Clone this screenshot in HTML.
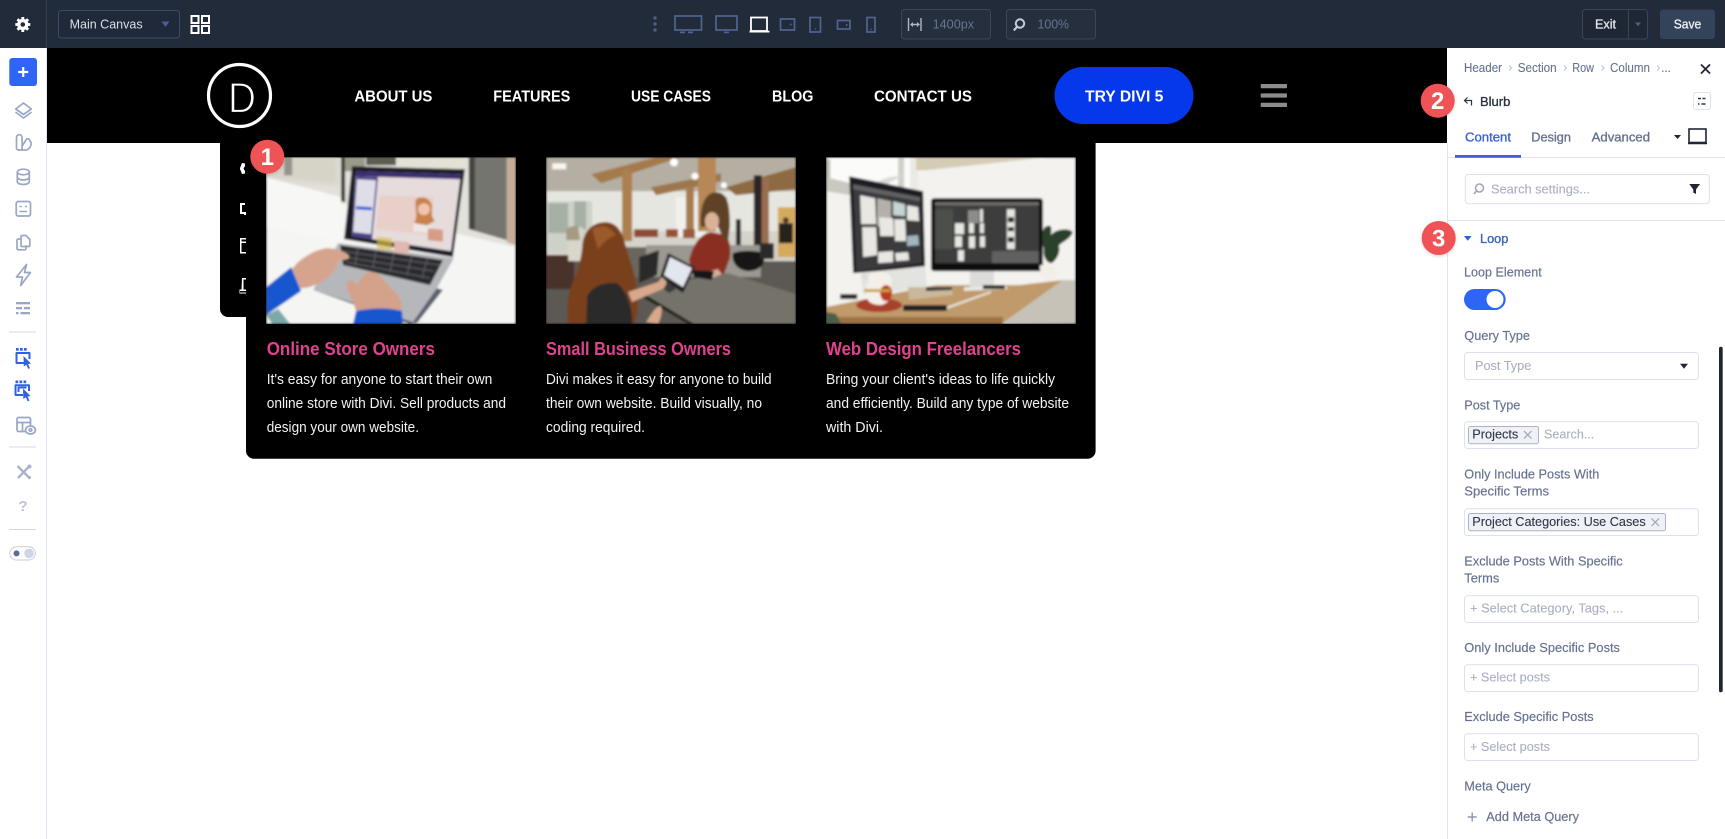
<!DOCTYPE html>
<html lang="en">
<head>
<meta charset="utf-8">
<title>Divi Builder</title>
<style>
html,body{margin:0;padding:0;background:#fff;width:1725px;height:839px;overflow:hidden}
svg{display:block}
text{font-family:"Liberation Sans",Arial,sans-serif}
.nav{font-size:16px;font-weight:700;fill:#fff}
.tt{font-size:18.5px;font-weight:700;fill:#e0428e}
.ds{font-size:14.7px;fill:#f2f2f2}
.lb{font-size:13px;fill:#66728f;stroke:#66728f;stroke-width:.18}
.ph{font-size:13px;fill:#a8afc0;stroke:#a8afc0;stroke-width:.1}
.tag{font-size:13px;fill:#2f3847;stroke:#2f3847;stroke-width:.12}
.crumb{font-size:12.6px;fill:#66738f;stroke:#66738f;stroke-width:.1}
.f{fill:#fff;stroke:#dde1ec;stroke-width:1}
.i{fill:none;stroke:#9aa6c6;stroke-width:1.7;stroke-linecap:round;stroke-linejoin:round}
.b{fill:none;stroke:#2f62e0;stroke-width:2;stroke-linejoin:round}
.d{fill:none;stroke:#50648f;stroke-width:1.7}
.badge{font-size:24px;font-weight:700;fill:#fff;text-anchor:middle}
</style>
</head>
<body>
<svg xmlns="http://www.w3.org/2000/svg" width="1725" height="839" viewBox="0 0 1725 839">
<defs>
<filter id="bl" x="-5%" y="-5%" width="110%" height="110%"><feGaussianBlur stdDeviation="1"/></filter>
<filter id="bl2" x="-10%" y="-10%" width="120%" height="120%"><feGaussianBlur stdDeviation="3"/></filter>
<filter id="sh" x="-30%" y="-30%" width="160%" height="160%"><feDropShadow dx="0" dy="1" stdDeviation="1.5" flood-color="#000" flood-opacity=".18"/></filter>
</defs>

<rect width="1725" height="839" fill="#fff"/>

<!-- Top bar -->
<rect width="1725" height="48" fill="#222b3a"/>
<rect x="46" y="0" width="1" height="48" fill="#343e50"/>
<!-- gear -->
<circle cx="22.800" cy="24.500" r="4" fill="none" stroke="#fff" stroke-width="3.400"/>
<path d="M22.800 17v15M15.300 24.500h15M17.500 19.200l10.600 10.600M28.100 19.200L17.500 29.800" stroke="#fff" stroke-width="2.800" stroke-dasharray="3.200 8.600 3.200" fill="none"/>
<rect x="58.500" y="10.500" width="121" height="27.500" rx="3" fill="#20293a" stroke="#3d4a68"/>
<text x="69.600" y="28.600" font-size="13" fill="#d9dee8" textLength="73" lengthAdjust="spacingAndGlyphs">Main Canvas</text>
<path d="M161.500 21.500h8l-4 5.500z" fill="#4a5d92"/>
<g fill="none" stroke="#fff" stroke-width="2">
<rect x="191.500" y="16" width="7" height="7"/><rect x="202" y="16" width="7" height="7"/>
<rect x="191.500" y="26" width="7" height="7"/><rect x="202" y="26" width="7" height="7"/>
</g>
<!-- device icons -->
<g fill="#4f5e7c"><circle cx="655" cy="18" r="1.700"/><circle cx="655" cy="24" r="1.700"/><circle cx="655" cy="30" r="1.700"/></g>
<g class="d">
<rect x="675" y="16" width="26.500" height="14"/><path d="M680 32.400h5M688 32.400h5"/>
<rect x="716" y="16" width="21" height="14"/><path d="M724 32.400h5"/>
<rect x="780.500" y="19" width="14" height="11"/><path d="M790 24.500h1.500"/>
<rect x="810" y="17.500" width="10.500" height="14.500"/><path d="M815 29h.8"/>
<rect x="837.500" y="20.500" width="12.500" height="8.500"/><path d="M846 25h1.500"/>
<rect x="867" y="17.500" width="8" height="14.500"/><path d="M870.500 29.500h1"/>
</g>
<rect x="751" y="17.500" width="16" height="13.500" fill="none" stroke="#fff" stroke-width="1.800"/>
<path d="M749.500 31.600h20" stroke="#fff" stroke-width="1.800"/>
<rect x="901.500" y="9.500" width="89" height="29.500" rx="3" fill="#262f3e" stroke="#3b465a"/>
<rect x="1006.500" y="9.500" width="89" height="29.500" rx="3" fill="#262f3e" stroke="#3b465a"/>
<path d="M908.500 18v13M921 18v13M911 24.500h8" stroke="#aeb6c6" stroke-width="1.400" fill="none"/>
<path d="M910 24.500l3-2.500v5zM920 24.500l-3-2.500v5z" fill="#aeb6c6"/>
<text x="932.600" y="28.600" font-size="13" fill="#66748f" textLength="41.500" lengthAdjust="spacingAndGlyphs">1400px</text>
<circle cx="1020" cy="23.500" r="4.200" fill="none" stroke="#c6ccd8" stroke-width="2"/>
<path d="M1017 27l-3.200 3.400" stroke="#c6ccd8" stroke-width="2.200"/>
<text x="1037.500" y="28.600" font-size="13" fill="#66748f" textLength="31.500" lengthAdjust="spacingAndGlyphs">100%</text>
<rect x="1582.500" y="9.500" width="65" height="29.500" rx="3" fill="#1f2735" stroke="#3a4558"/>
<path d="M1628.500 9.500v29.500" stroke="#3a4558"/>
<text x="1595" y="28.300" font-size="13" fill="#e6e9ef" stroke="#e6e9ef" stroke-width=".3" textLength="21" lengthAdjust="spacingAndGlyphs">Exit</text>
<path d="M1635 22.500h6l-3 3.800z" fill="#53627f"/>
<rect x="1660" y="9.500" width="55" height="29.500" rx="3" fill="#33435a"/>
<text x="1673.700" y="28.300" font-size="13" fill="#edf0f5" stroke="#edf0f5" stroke-width=".3" textLength="27.600" lengthAdjust="spacingAndGlyphs">Save</text>

<!-- Header -->
<rect x="47" y="48" width="1400" height="95" fill="#000"/>
<circle cx="239.500" cy="95.500" r="31" fill="none" stroke="#fff" stroke-width="3.200"/>
<text x="228" y="112.600" font-size="43" fill="#fff" stroke="#000" stroke-width="1.200" textLength="28" lengthAdjust="spacingAndGlyphs">D</text>
<text class="nav" x="354.400" y="101.500" textLength="78" lengthAdjust="spacingAndGlyphs">ABOUT US</text>
<text class="nav" x="493.300" y="101.500" textLength="77" lengthAdjust="spacingAndGlyphs">FEATURES</text>
<text class="nav" x="631" y="101.500" textLength="80" lengthAdjust="spacingAndGlyphs">USE CASES</text>
<text class="nav" x="772" y="101.500" textLength="41.400" lengthAdjust="spacingAndGlyphs">BLOG</text>
<text class="nav" x="874" y="101.500" textLength="98" lengthAdjust="spacingAndGlyphs">CONTACT US</text>
<rect x="1054.500" y="67" width="139" height="57" rx="28.500" fill="#0438ea"/>
<text class="nav" x="1085" y="101.500" textLength="78.400" lengthAdjust="spacingAndGlyphs">TRY DIVI 5</text>
<g fill="#8c8c8c"><rect x="1260.700" y="84" width="26.300" height="4.200" rx=".8"/><rect x="1260.700" y="93.400" width="26.300" height="4.200" rx=".8"/><rect x="1260.700" y="102.800" width="26.300" height="4.200" rx=".8"/></g>

<!-- Sidebar -->
<rect x="46" y="48" width="1" height="791" fill="#dfe3f0"/>
<rect x="9.300" y="58" width="27.700" height="28" rx="3" fill="#2f65f5"/>
<path d="M23.200 67v10M18.200 72h10" stroke="#fff" stroke-width="2.200"/>
<g class="i">
<path d="M23.500 103l7.800 6-7.800 5.500-7.800-5.500z"/><path d="M16 112.500l7.500 5.500 7.500-5.500"/>
<path d="M16.500 148v-10.500a2.800 2.800 0 0 1 5.600 0V150h-3.600a2 2 0 0 1-2-2z"/><path d="M22.200 146l3.800-6c1-1.800 3-1.500 3.600.2.300.8 2 1.800 1.500 4.300-.6 3-3 5.500-5.600 5.500h-3.300"/>
<ellipse cx="23.300" cy="172" rx="6" ry="2.800"/><path d="M17.300 172v9.500c0 1.800 2.700 3 6 3s6-1.200 6-3V172M17.300 177c0 1.800 2.700 3 6 3s6-1.200 6-3"/>
<rect x="16.200" y="201.500" width="14.300" height="14.500" rx="2"/>
<path d="M20 206.500h1M25.500 206.500h1M20 211.500h6.500" stroke-width="1.500"/>
<path d="M21 239h-2.700a1.300 1.300 0 0 0-1.300 1.300v8.200a1.300 1.300 0 0 0 1.300 1.300h6.400a1.300 1.300 0 0 0 1.300-1.300V246"/><path d="M21 236.500a1 1 0 0 1 1-1h4l3.800 4v6a1 1 0 0 1-1 1H22a1 1 0 0 1-1-1z"/>
<path d="M26.500 264.500l-10 12.500h6l-1.800 8.500 9.800-13h-6z"/>
</g>
<g fill="#9aa6c6">
<rect x="16" y="302" width="14" height="2.300"/><rect x="16" y="307" width="6" height="2.300"/><rect x="24" y="307" width="6" height="2.300"/><rect x="16" y="312" width="2.500" height="2.300"/><rect x="20.500" y="312" width="9.500" height="2.300"/>
</g>
<g fill="#d3d8e6"><rect x="9" y="331.500" width="27" height="1"/><rect x="9" y="446.500" width="27" height="1"/><rect x="9" y="529" width="27" height="1"/></g>
<g fill="#2f62e0"><rect x="16" y="348" width="2.700" height="2.700"/><rect x="20" y="348" width="2.700" height="2.700"/><rect x="24" y="348" width="2.700" height="2.700"/>
<rect x="15.500" y="380.500" width="2.700" height="2.700"/><rect x="19.500" y="380.500" width="2.700" height="2.700"/><rect x="23.500" y="380.500" width="2.700" height="2.700"/></g>
<path class="b" d="M24 363h-7.500v-10h13v6"/>
<path d="M23.500 356l7.500 7.500-3 .6 2 4-1.700.8-2-4.200-2.500 1.800z" fill="#2f62e0"/>
<path class="b" d="M23 395h-7.500v-9.800h13.500V391"/><path class="b" d="M18.500 392v-4.500h8"/>
<path d="M23 388.500l7.500 7.500-3 .6 2 4-1.700.8-2-4.200-2.500 1.800z" fill="#2f62e0"/>
<g class="i">
<rect x="17" y="417.500" width="13.500" height="14" rx="1.500"/><path d="M17 422.500h13.500M22.500 422.500v9"/>
<ellipse cx="30.500" cy="430" rx="5" ry="4" fill="#fff"/><circle cx="30.500" cy="430" r="1.300"/>
</g>
<path d="M17.500 466l12.500 12.500" stroke="#a9b3cc" stroke-width="2.400"/>
<path d="M30 465.500L18 478" stroke="#a9b3cc" stroke-width="2.400"/>
<circle cx="29.500" cy="477.500" r="1.600" fill="#a9b3cc"/><circle cx="29.500" cy="466.500" r="2" fill="#a9b3cc"/>
<text x="23" y="511" font-size="15" font-weight="700" fill="#bcc3d6" text-anchor="middle">?</text>
<rect x="9.800" y="546.800" width="25.500" height="13.200" rx="6.600" fill="#fff" stroke="#c8cede"/>
<circle cx="16.500" cy="553.400" r="3" fill="#5a6a96"/><circle cx="29" cy="553.400" r="4.800" fill="#cdd5e6"/>

<!-- Dropdown -->
<path d="M220 143h26v174h-18a8 8 0 0 1-8-8z" fill="#000"/>
<path d="M246 143h849.600v307.700a8 8 0 0 1-8 8H254a8 8 0 0 1-8-8z" fill="#000"/>
<g fill="#fff">
<path d="M240 168l2-5 3 .5v2.500l-1.500 2.500 1.500 2.500v2.500l-3 .5-2-5z"/>
<path d="M240 203h5v2h-3v7h4v3h-2v-1h-4z"/>
<path d="M240 238h6v1.500h-4.500v2h4.500v1.500h-4.500v9h4.500v1.500h-6z"/>
<path d="M242 278h4v1.500h-2.500v10h2.500v1.500h-6v1.500h6v1h-6.500v-4h2z"/>
</g>

<!-- Photo 1 -->
<svg x="266" y="157.300" width="250" height="166.700" viewBox="0 0 250 167">
<g filter="url(#bl)">
<rect width="250" height="167" fill="#f5f5f3"/>
<path d="M0 0h250v90L185 75 0 26z" fill="#e2e1da"/>
<path d="M0 0h72v28L0 20z" fill="#d6d3c7" filter="url(#bl2)"/>
<path d="M18 0h8v18h-8z" fill="#95938a"/>
<path d="M0 20l75 20 0 45L0 70z" fill="#f7f7f5"/>
<path d="M75 0h4v45l-4-1z" fill="#3e3d38"/>
<path d="M79 0h20v14H79z" fill="#9a9a8a"/>
<path d="M100 0h30v8h-30z" fill="#5d5c50"/>
<path d="M130 0h72v14h-72z" fill="#e4e1d6"/>
<path d="M203 0h38v83l-38-11z" fill="#74756f"/>
<path d="M203 0h6v72h-6z" fill="#45453f"/>
<path d="M241 0h9v88l-9-3z" fill="#c6ab98"/>
<!-- laptop base -->
<path d="M72 86l116 15-17 30-24 34-100-32z" fill="#b6b7ba"/>
<path d="M47 133l100 32 24-34 6 2-26 33-8 1z" fill="#5a6070"/>
<path d="M74 88l103 15-13 25-87-20z" fill="#2a2b2f"/>
<g stroke="#77787c" stroke-width="1" opacity=".7"><path d="M76 94l98 14M78 100l90 14M80 105l84 16"/><path d="M92 90l-3 18M110 93l-3 18M128 96l-4 19M146 98l-5 20M162 100l-6 21"/></g>
<!-- screen -->
<path d="M86 9l113 3-12 88-109-18z" fill="#1d1d28"/>
<path d="M90 14l105 3-10 77-99-15z" fill="#e6dcdb"/>
<path d="M90 14l105 3-.5 5-104.700-3z" fill="#3a2d70"/>
<path d="M90 19l22 1-6 62-20-3z" fill="#4b3f8a"/>
<path d="M91 22l19 1-5 54-18-2z" fill="#dedee8"/>
<path d="M90 49l16 1v3l-16-1z" fill="#1c57d8"/>
<path d="M114 38l54 2-5 38-53-6z" fill="#e8cfc9"/>
<path d="M150 42c6-4 14-1 16 6 1 6-2 10 3 16l-12 6-9-5c5-5 0-14 2-23z" fill="#c8824e"/>
<circle cx="158" cy="52" r="6" fill="#f0c4ae"/>
<path d="M148 66l18 3-1 7-18-2z" fill="#efe7e6"/>
<rect x="111" y="68" width="15" height="12" fill="#d8c04a" opacity=".7" transform="skewY(6)"/>
<rect x="128" y="70" width="15" height="12" fill="#e0b8b0" transform="skewY(6)"/>
<rect x="162" y="54" width="15" height="12" fill="#d59c86" transform="skewY(6)"/>
<!-- hands -->
<path d="M26 112c8-12 25-20 35-21 8 0 20 4 22 8 1 3-4 4-10 4-2 6-5 12-12 18-8 6-20 11-27 10z" fill="#d6a48d"/>
<path d="M81 125c5-4 8-1 10 4 2-6 8-14 14-14 6-1 10 5 16 12 6 7 14 12 15 20l-1 10-44 0c-2-6-4-14-10-24z" fill="#d4a28a"/>
<path d="M0 130l25-20 10 24L0 158z" fill="#1456cf"/>
<path d="M87 167l3-13c14-3 32-4 46 0l1 13z" fill="#1456cf"/>
<path d="M0 158l12-6 12 15H6z" fill="#7ba9a8"/>
</g>
</svg>

<!-- Photo 2 -->
<svg x="546" y="157.300" width="250" height="166.700" viewBox="0 0 250 167">
<g filter="url(#bl)">
<rect width="250" height="167" fill="#d5d3ca"/>
<path d="M0 0h250v34H0z" fill="#b5afa3"/>
<path d="M0 34h250v40H0z" fill="#e6e6e0"/>
<path d="M130 40h30v40h-30z" fill="#f0f1ee"/>
<path d="M0 44h46v50H0z" fill="#cdd2c8"/>
<path d="M2 46h20v30H2zM28 44h12v28H28z" fill="#8d9a8e" opacity=".6"/>
<rect x="0" y="104" width="250" height="63" fill="#5b5953"/>
<path d="M100 88h115v32H100z" fill="#9a9890"/>
<path d="M45 17L110 0h25L55 26z" fill="#a47a4c"/>
<path d="M105 30l70-14 0 8-65 14z" fill="#9c774d"/>
<path d="M180 30l70-20v22l-60 6z" fill="#8d6a42"/>
<rect x="76" y="12" width="10" height="72" fill="#ad7f4e"/>
<rect x="140" y="30" width="8" height="48" fill="#a97c4e"/>
<rect x="152" y="0" width="18" height="74" fill="#b78755"/>
<rect x="176" y="40" width="5" height="40" fill="#a07a52"/>
<rect x="208" y="18" width="8" height="70" fill="#2a2825"/>
<rect x="216" y="20" width="7" height="70" fill="#9b6c4f"/>
<path d="M232 50h18v50h-18z" fill="#d5aa5e"/>
<rect x="233" y="66" width="14" height="20" fill="#26231f"/>
<circle cx="240" cy="63" r="3" fill="#4a372b"/>
<rect x="190" y="62" width="5" height="26" fill="#2c2b2d"/>
<circle cx="128" cy="5" r="4" fill="#fff"/><circle cx="149" cy="19" r="3.500" fill="#fff"/><circle cx="178" cy="28" r="3" fill="#fff"/>
<rect x="6" y="6" width="14" height="6" fill="#f7f7f2"/>
<path d="M0 98h28v34H0z" fill="#4a3029"/>
<rect x="22" y="70" width="14" height="34" fill="#d9d6cc"/>
<path d="M20 72c2-2 8-4 12-3l2 14H20z" fill="#a59b83"/>
<rect x="88" y="72" width="24" height="8" fill="#8f4a36"/><rect x="120" y="72" width="12" height="8" fill="#9a4f38"/><rect x="137" y="72" width="12" height="9" fill="#9a5a3e"/>
<path d="M187 96c8-3 22-3 31 0 2 10-2 17-15 18-10 0-18-8-16-18z" fill="#151515"/>
<rect x="214" y="86" width="14" height="16" fill="#2a2a2a"/>
<path d="M90 132l92-16 68 21v30H148z" fill="#747369"/>
<path d="M90 132l58 35h-6l-56-33z" fill="#24221f"/>
<path d="M80 90h20v30H80z" fill="#6a665c"/>
<path d="M93 100l20-7 -2 25-18 8z" fill="#2b2b2b"/>
<!-- woman in red -->
<path d="M143 103c4-14 10-26 22-28l10 2c10 2 10 14 9 24l-6 16-20 2-12-5z" fill="#8b2d22"/>
<path d="M155 70c-2-20 4-35 15-35 12 0 14 12 14 34l-2 16-5-4c-3-8-6-14-7-14-6 0-9 2-15 3z" fill="#5f4326"/>
<ellipse cx="166" cy="64" rx="7" ry="9" fill="#dcb295"/>
<path d="M160 115l12-3 4 5-10 4z" fill="#d6ad96"/>
<path d="M146 113l22 1-2 9-18-3z" fill="#171717"/>
<!-- tablet -->
<path d="M122 96l27 14-12 26-23-16z" fill="#1f1f22"/>
<path d="M124 100l22 11-9 19-19-12z" fill="#e2e7ef"/>
<path d="M110 126l10-4 10 10-7 4z" fill="#3a3a3d"/>
<!-- red head -->
<path d="M36 90c1-16 10-25 24-25 12 1 16 10 20 25 6 20 12 36 12 55 0 10-2 18-4 22H22c-2-14-1-28 3-38 6-14 10-26 11-39z" fill="#7a401f"/>
<path d="M46 72c10-6 18-2 24 6-6 2-12 6-18 14z" fill="#9a5a2c"/>
<path d="M41 139c6-11 18-14 30-13 10 8 16 26 15 41H40z" fill="#2b2b2c"/>
<path d="M82 135l30-10 4-5 4 4c1 4-2 8-6 9l-28 12z" fill="#d7a88b"/>
<path d="M100 165c6-8 8-14 14-16 3 2 2 10-2 18z" fill="#d7a88b"/>
</g>
</svg>

<!-- Photo 3 -->
<svg x="826" y="157.300" width="250" height="166.700" viewBox="0 0 250 167">
<g filter="url(#bl)">
<rect width="250" height="167" fill="#f3f2ef"/>
<path d="M0 0h85v40L0 20z" fill="#fbfbf9"/>
<path d="M0 2l4 0 0 30-4-2z" fill="#bfbfb5"/>
<path d="M0 20l73 18 4 8L0 34z" fill="#c9c9bf"/>
<rect x="72" y="0" width="6" height="40" fill="#cfcfc6"/><rect x="84" y="0" width="8" height="120" fill="#ebeae5"/>
<path d="M90 0h130L100 13l-10 0z" fill="#d5ccb4"/>
<path d="M50 25l12-5 16-2-14 7-8 5z" fill="#dbdbd3"/>
<!-- desk -->
<path d="M0 150l110-22 83 0 44-5-60 43-10 1H0z" fill="#c09a6a"/>
<path d="M177 166l60-43h13v44z" fill="#c6c2b8"/>
<path d="M0 160h177v7H0z" fill="#9c7244"/>
<path d="M120 150l45-16 0 2-44 16z" fill="#e9e5dc"/>
<!-- monitor 1 -->
<path d="M23 19l74 15 2 76-72 6z" fill="#1c1d20"/>
<path d="M27 27l67 13 2 66-66 8z" fill="#3a3b3d"/>
<path d="M27 27l67 13v4l-67-12z" fill="#8a8a8a" opacity=".5"/>
<g fill="#e9e7e2"><path d="M34 38l15 3 1 26-15 0z"/><path d="M51 41l14 3 0 28-14-3z" fill="#b5b1aa"/><path d="M53 60l14 1 1 18-14 0z"/><path d="M67 44l12 3v12l-12-1z" fill="#c4d5d2"/><path d="M68 62l11 0 1 22-11 0z"/><path d="M81 48l11 2 1 14-12-1z"/><path d="M81 79l11-1 1 10-12 1z" fill="#9fb7bd"/><path d="M36 70l14 0 1 28-14 2z"/><path d="M52 95l15-1 0 11-15 1z"/><path d="M69 96l13-1 1 8-13 1z"/></g>
<path d="M35 116l64-7 2 21-58 8-6 0z" fill="#e3e3df"/>
<!-- monitor 2 -->
<rect x="144" y="114" width="24" height="16" fill="#dcdcda"/>
<path d="M138 130l42-1 2 3-44 2z" fill="#e8e8e4"/>
<rect x="105" y="41" width="112" height="73" rx="3" fill="#111"/>
<rect x="109" y="45" width="104" height="61" fill="#3c3e3e"/>
<rect x="109" y="45" width="104" height="3" fill="#6f706e"/>
<rect x="109" y="52" width="18" height="40" fill="#4e4f4c"/>
<g fill="#e6e6e2"><rect x="129" y="66" width="9" height="11"/><rect x="142" y="53" width="11" height="13" fill="#8c8d8b"/><rect x="143" y="66" width="5" height="10"/><rect x="154" y="52" width="3" height="13"/><rect x="154" y="66" width="4" height="10"/><rect x="129" y="79" width="7" height="11"/><rect x="143" y="79" width="6" height="12"/><rect x="154" y="79" width="5" height="11"/><rect x="181" y="52" width="8" height="40"/><rect x="132" y="93" width="6" height="11"/><rect x="166" y="94" width="47" height="12" fill="#5e615f"/></g>
<g fill="#222"><rect x="182" y="60" width="6" height="5"/><rect x="182" y="70" width="6" height="4"/><rect x="182" y="80" width="6" height="5"/></g>
<!-- plant / pot -->
<path d="M219 70c4-2 8-4 6 8 4-6 18-8 22-3-3 8-12 10-14 14 2 4-1 13-7 17-5 0-9-6-8-14-2-8-3-16 1-22z" fill="#2c3f2a"/>
<path d="M214 108h17c0 10-3 16-8 16-6 0-9-6-9-16z" fill="#f4efe6"/>
<!-- misc -->
<path d="M82 130l44 0 1 8-44 5z" fill="#c9b89c"/>
<path d="M100 130h26v3l-26 1z" fill="#3a3a38"/>
<rect x="157" y="128" width="22" height="4" fill="#2a2723"/>
<rect x="14" y="137" width="17" height="5" fill="#26272a"/>
<rect x="77" y="148" width="44" height="6" rx="1.500" fill="#232325"/>
<path d="M35 116h22v6H35z" fill="#ddd"/>
<!-- lucky cat -->
<ellipse cx="53" cy="148" rx="23" ry="7" fill="#a8402b"/>
<path d="M43 123c-3-4 0-8 6-7 4-2 10-1 13 1 5 3 4 10 2 14 3 6 0 15-9 17-8 0-14-2-15-10 0-6 0-11 3-15z" fill="#f4efe9"/>
<ellipse cx="60" cy="136" rx="6" ry="8" fill="#bb3b22"/>
<path d="M38 132h26v3H38z" fill="#c9a23c"/>
<path d="M0 155l10 2 5 10H0z" fill="#4d5e4a"/>
</g>
</svg>

<!-- Dropdown text -->
<text class="tt" x="266.700" y="355" textLength="168.300" lengthAdjust="spacingAndGlyphs">Online Store Owners</text>
<text class="tt" x="546" y="355" textLength="185" lengthAdjust="spacingAndGlyphs">Small Business Owners</text>
<text class="tt" x="826" y="355" textLength="195" lengthAdjust="spacingAndGlyphs">Web Design Freelancers</text>
<text class="ds" x="266.700" y="384" textLength="225.600" lengthAdjust="spacingAndGlyphs">It's easy for anyone to start their own</text>
<text class="ds" x="266.700" y="408" textLength="239.300" lengthAdjust="spacingAndGlyphs">online store with Divi. Sell products and</text>
<text class="ds" x="266.700" y="432" textLength="152.300" lengthAdjust="spacingAndGlyphs">design your own website.</text>
<text class="ds" x="546" y="384" textLength="225.600" lengthAdjust="spacingAndGlyphs">Divi makes it easy for anyone to build</text>
<text class="ds" x="546" y="408" textLength="216" lengthAdjust="spacingAndGlyphs">their own website. Build visually, no</text>
<text class="ds" x="546" y="432" textLength="99" lengthAdjust="spacingAndGlyphs">coding required.</text>
<text class="ds" x="826" y="384" textLength="229" lengthAdjust="spacingAndGlyphs">Bring your client's ideas to life quickly</text>
<text class="ds" x="826" y="408" textLength="243" lengthAdjust="spacingAndGlyphs">and efficiently. Build any type of website</text>
<text class="ds" x="826" y="432" textLength="57" lengthAdjust="spacingAndGlyphs">with Divi.</text>

<!-- Right panel -->
<rect x="1447" y="48" width="278" height="791" fill="#fff"/>
<rect x="1447" y="143" width="1" height="696" fill="#dfe3ee"/>
<text class="crumb" x="1464" y="72" textLength="38" lengthAdjust="spacingAndGlyphs">Header</text>
<text class="crumb" x="1517.700" y="72" textLength="39" lengthAdjust="spacingAndGlyphs">Section</text>
<text class="crumb" x="1572.300" y="72" textLength="21.700" lengthAdjust="spacingAndGlyphs">Row</text>
<text class="crumb" x="1610" y="72" textLength="40" lengthAdjust="spacingAndGlyphs">Column</text>
<g fill="none" stroke="#b7bece" stroke-width="1"><path d="M1509 65.500l2.500 2.500-2.500 2.500M1564 65.500l2.500 2.500-2.500 2.500M1601.500 65.500l2.500 2.500-2.500 2.500M1657 65.500l2.500 2.500-2.500 2.500"/></g>
<text class="crumb" x="1661" y="72" textLength="10">...</text>
<path d="M1701 64.500l9 9M1710 64.500l-9 9" stroke="#1f2734" stroke-width="1.800" fill="none"/>
<path d="M1465 100.500h6.500v5M1467.500 97.500l-3 3 3 3" fill="none" stroke="#2b3443" stroke-width="1.200"/>
<text x="1480" y="106" font-size="13" fill="#2b3443" stroke="#2b3443" stroke-width=".35" textLength="30.300" lengthAdjust="spacingAndGlyphs">Blurb</text>
<rect x="1693.500" y="92.500" width="17" height="17" rx="2" fill="#fff" stroke="#dfe3ee"/>
<path d="M1698 98.500h3M1702.500 98.500h3M1698 104h1.500M1701.500 104h4" stroke="#2b3443" stroke-width="1.500"/>
<text x="1465" y="141.300" font-size="13" fill="#3a62d6" stroke="#3a62d6" stroke-width=".35" textLength="46" lengthAdjust="spacingAndGlyphs">Content</text>
<text x="1531.300" y="141.300" font-size="13" fill="#66738f" stroke="#66738f" stroke-width=".35" textLength="39.700" lengthAdjust="spacingAndGlyphs">Design</text>
<text x="1591.700" y="141.300" font-size="13" fill="#66738f" stroke="#66738f" stroke-width=".35" textLength="58.300" lengthAdjust="spacingAndGlyphs">Advanced</text>
<path d="M1674 135h7l-3.500 4z" fill="#1f2734"/>
<rect x="1689" y="129" width="17" height="13.500" fill="none" stroke="#1f2734" stroke-width="1.600"/><path d="M1688 143.500h19" stroke="#1f2734" stroke-width="1.400"/>
<rect x="1448" y="157" width="277" height="1" fill="#dfe3ee"/>
<rect x="1455" y="155" width="66" height="2.800" fill="#3a62d6"/>
<rect class="f" x="1465.300" y="174.500" width="244" height="29.300" rx="3"/>
<circle cx="1479.500" cy="188" r="4" fill="none" stroke="#9ca5b8" stroke-width="1.500"/><path d="M1476.500 191l-2.500 3" stroke="#9ca5b8" stroke-width="1.500"/>
<text class="ph" x="1491" y="193.700" textLength="99" lengthAdjust="spacingAndGlyphs">Search settings...</text>
<path d="M1689.300 184h10.700l-4 5.500v4.500l-2.700-1.400v-3.100z" fill="#1f2734"/>
<rect x="1448" y="220" width="277" height="1" fill="#dfe3ee"/>
<path d="M1464 236h7.500l-3.750 4.800z" fill="#2f5cd8"/>
<text x="1480" y="243" font-size="13" fill="#3a62c0" stroke="#3a62c0" stroke-width=".35" textLength="28.300" lengthAdjust="spacingAndGlyphs">Loop</text>
<text class="lb" x="1464" y="276.700" textLength="77.700" lengthAdjust="spacingAndGlyphs">Loop Element</text>
<rect x="1464" y="289" width="41.700" height="21" rx="10.500" fill="#2f65f5"/>
<circle cx="1495" cy="299.500" r="8.500" fill="#fff"/>
<text class="lb" x="1464.300" y="340" textLength="65.700" lengthAdjust="spacingAndGlyphs">Query Type</text>
<rect class="f" x="1464.500" y="352.500" width="234" height="27" rx="3"/>
<text class="ph" x="1475" y="370" textLength="56.300" lengthAdjust="spacingAndGlyphs">Post Type</text>
<path d="M1680 363.700h8l-4 5z" fill="#1f2734"/>
<text class="lb" x="1464.300" y="409.300" textLength="56" lengthAdjust="spacingAndGlyphs">Post Type</text>
<rect class="f" x="1464.500" y="421.700" width="234" height="26.800" rx="3"/>
<rect x="1468.500" y="426.500" width="70" height="17.200" rx="2" fill="#eff1f6" stroke="#aab3c9"/>
<text class="tag" x="1472.300" y="438.700" textLength="46" lengthAdjust="spacingAndGlyphs">Projects</text>
<path d="M1524 431l7.500 7.500M1531.500 431l-7.500 7.500" stroke="#9aa4b8" stroke-width="1.200"/>
<text class="ph" x="1544" y="438.700" textLength="50.300" lengthAdjust="spacingAndGlyphs">Search...</text>
<text class="lb" x="1464.300" y="478.300" textLength="135" lengthAdjust="spacingAndGlyphs">Only Include Posts With</text>
<text class="lb" x="1464.300" y="495.700" textLength="84.700" lengthAdjust="spacingAndGlyphs">Specific Terms</text>
<rect class="f" x="1464.500" y="508.700" width="234" height="26.800" rx="3"/>
<rect x="1468.500" y="513.500" width="197" height="17.200" rx="2" fill="#eff1f6" stroke="#aab3c9"/>
<text class="tag" x="1472.300" y="526" textLength="173.400" lengthAdjust="spacingAndGlyphs">Project Categories: Use Cases</text>
<path d="M1651.500 518.500l7.500 7.500M1659 518.500l-7.500 7.500" stroke="#9aa4b8" stroke-width="1.200"/>
<text class="lb" x="1464.300" y="565.300" textLength="158.400" lengthAdjust="spacingAndGlyphs">Exclude Posts With Specific</text>
<text class="lb" x="1464.300" y="582.700" textLength="35" lengthAdjust="spacingAndGlyphs">Terms</text>
<rect class="f" x="1464.500" y="595.700" width="234" height="26.800" rx="3"/>
<text class="ph" x="1470" y="612.700" textLength="153.300" lengthAdjust="spacingAndGlyphs">+ Select Category, Tags, ...</text>
<text class="lb" x="1464.300" y="652" textLength="155.700" lengthAdjust="spacingAndGlyphs">Only Include Specific Posts</text>
<rect class="f" x="1464.500" y="664.700" width="234" height="26.800" rx="3"/>
<text class="ph" x="1470" y="681.700" textLength="80" lengthAdjust="spacingAndGlyphs">+ Select posts</text>
<text class="lb" x="1464.300" y="721" textLength="129.400" lengthAdjust="spacingAndGlyphs">Exclude Specific Posts</text>
<rect class="f" x="1464.500" y="733.700" width="234" height="26.800" rx="3"/>
<text class="ph" x="1470" y="751" textLength="80" lengthAdjust="spacingAndGlyphs">+ Select posts</text>
<text class="lb" x="1464.300" y="790.700" textLength="66.400" lengthAdjust="spacingAndGlyphs">Meta Query</text>
<path d="M1467.700 817h9M1472.200 812.500v9" stroke="#8d97ad" stroke-width="1.400"/>
<text class="lb" x="1486.300" y="821" textLength="92.700" lengthAdjust="spacingAndGlyphs">Add Meta Query</text>
<rect x="1719" y="346.700" width="3.700" height="345.600" rx="1.800" fill="#1f2734"/>

<!-- Badges -->
<g filter="url(#sh)">
<circle cx="267.300" cy="156.700" r="17" fill="#ef5354"/>
<circle cx="1437.700" cy="100.700" r="17" fill="#ef5354"/>
<circle cx="1438.700" cy="238" r="17" fill="#ef5354"/>
</g>
<text class="badge" x="267.300" y="165.200">1</text>
<text class="badge" x="1437.700" y="109.200">2</text>
<text class="badge" x="1438.700" y="246.500">3</text>
</svg>
</body>
</html>
